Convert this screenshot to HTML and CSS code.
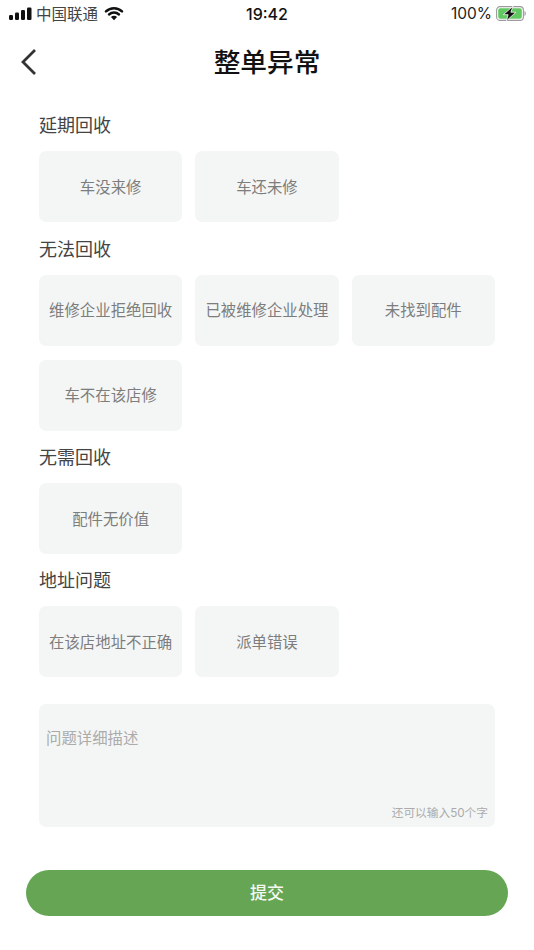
FILE: index.html
```html
<!DOCTYPE html>
<html lang="zh-CN">
<head>
<meta charset="utf-8">
<title>整单异常</title>
<link rel="stylesheet" href="styles.css">
</head>
<body>
<div class="page">
  <div class="statusbar">
    <div class="sb-left">
      <svg class="signal" width="23" height="14" viewBox="0 0 23 14"><rect x="0" y="8" width="4" height="5" rx="1.200"/><rect x="6" y="5.500" width="4" height="7.500" rx="1.200"/><rect x="12" y="3" width="4" height="10" rx="1.200"/><rect x="18" y="0.500" width="4.500" height="12.500" rx="1.200"/></svg>
      <span class="carrier">中国联通</span>
      <svg class="wifi" width="20" height="15" viewBox="0 0 20 15"><path d="M2 5.400c2.100-2 4.900-3.200 8-3.200s5.900 1.200 8 3.200" fill="none" stroke="#111" stroke-width="2.600" stroke-linecap="round"/><path d="M5 8.500c1.300-1.200 3-2 5-2s3.700.8 5 2" fill="none" stroke="#111" stroke-width="2.400" stroke-linecap="round"/><path d="M10 14.200 6.900 11c.8-.8 1.900-1.200 3.100-1.200s2.300.4 3.100 1.200z" fill="#111"/></svg>
    </div>
    <div class="sb-time">19:42</div>
    <div class="sb-right">
      <span class="percent">100%</span>
      <svg class="battery" width="30" height="15" viewBox="0 0 30 15"><rect x="0.600" y="0.600" width="26.800" height="13.800" rx="3.500" fill="none" stroke="#9a9a9a" stroke-width="1.100"/><rect x="2.200" y="2.200" width="23.600" height="10.600" rx="2" fill="#62c862"/><path d="M28.500 5v5c.8-.3 1.300-1.400 1.300-2.500s-.5-2.200-1.300-2.500z" fill="#9a9a9a"/><path d="M17 .200 7.300 8.700h4.800l-1.700 6.200 9.400-8.700h-4.900z" fill="#111" stroke="#fff" stroke-width="0.800"/></svg>
    </div>
  </div>
  <header class="navbar">
    <svg class="back" width="18" height="28" viewBox="0 0 18 28"><path d="M15 2 3 14l12 12" fill="none" stroke="#333" stroke-width="2.800"/></svg>
    <h1 class="title">整单异常</h1>
  </header>
  <main class="content">
    <section class="group">
      <div class="label">延期回收</div>
      <div class="chips"><div class="chip">车没来修</div><div class="chip">车还未修</div></div>
    </section>
    <section class="group">
      <div class="label">无法回收</div>
      <div class="chips"><div class="chip">维修企业拒绝回收</div><div class="chip">已被维修企业处理</div><div class="chip">未找到配件</div><div class="chip">车不在该店修</div></div>
    </section>
    <section class="group">
      <div class="label">无需回收</div>
      <div class="chips"><div class="chip">配件无价值</div></div>
    </section>
    <section class="group">
      <div class="label">地址问题</div>
      <div class="chips"><div class="chip">在该店地址不正确</div><div class="chip">派单错误</div></div>
    </section>
    <div class="desc">
      <div class="placeholder">问题详细描述</div>
      <div class="counter">还可以输入50个字</div>
    </div>
  </main>
  <div class="footer"><div class="submit">提交</div></div>
</div>
</body>
</html>
```
FILE: styles.css
```css
* { box-sizing: border-box; }
html, body { margin: 0; padding: 0; background: #fff; }
body { font-family: "Noto Sans CJK SC", "Liberation Sans", sans-serif; }
.page { width: 534px; height: 950px; overflow: hidden; }
.statusbar {
  height: 27px;
  display: grid;
  grid-template-columns: 1fr auto 1fr;
  align-items: center;
  padding: 0 9px;
  color: #111;
}
.sb-left { display: flex; align-items: center; }
.signal { fill: #111; margin-right: 5px; }
.carrier { font-size: 15.500px; line-height: 27px; color: #444; margin-left: -1px; }
.wifi { margin-left: 6px; }
.sb-time { font-family: "Inter", "Liberation Sans", sans-serif; font-size: 16px; font-weight: 500; }
.sb-right { display: flex; align-items: center; justify-content: flex-end; gap: 4px; margin-right: -1px; }
.percent { font-family: "Inter", "Liberation Sans", sans-serif; font-size: 15.500px; color: #222; }
.navbar {
  height: 70px;
  display: flex;
  align-items: center;
  justify-content: center;
  position: relative;
}
.navbar .back { position: absolute; left: 20px; top: 21px; }
.title { margin: 0 0 2px; font-size: 26.700px; line-height: 68px; font-weight: 500; color: #111; }
.content { padding: 15.300px 39px 0; }
.group { margin-bottom: 13.400px; }
.label { font-size: 18px; line-height: 24px; height: 26px; color: #444; margin-bottom: 13px; }
.chips { display: grid; grid-template-columns: repeat(3, 143.300px); column-gap: 13px; row-gap: 14px; }
.chip {
  height: 71px;
  padding-bottom: 2px;
  display: flex;
  align-items: center;
  justify-content: center;
  background: #f4f6f5;
  border-radius: 7px;
  font-size: 15.400px;
  color: #7d7d7d;
  white-space: nowrap;
}
.desc {
  margin-top: 26.200px;
  height: 123.500px;
  background: #f4f6f5;
  border-radius: 7px;
  display: flex;
  flex-direction: column;
  justify-content: space-between;
  padding: 20px 7px 5px 7px;
}
.placeholder { font-size: 15.400px; line-height: 26px; color: #ababab; }
.counter { font-family: "Inter", "Noto Sans CJK SC", sans-serif; font-size: 11.700px; line-height: 18px; color: #ababab; text-align: right; }
.footer { padding: 42.500px 26px 0; }
.submit {
  height: 46px;
  padding-bottom: 2px;
  border-radius: 23px;
  background: #65a553;
  color: #f4f8f2;
  font-size: 17px;
  font-weight: 500;
  display: flex;
  align-items: center;
  justify-content: center;
}
```
